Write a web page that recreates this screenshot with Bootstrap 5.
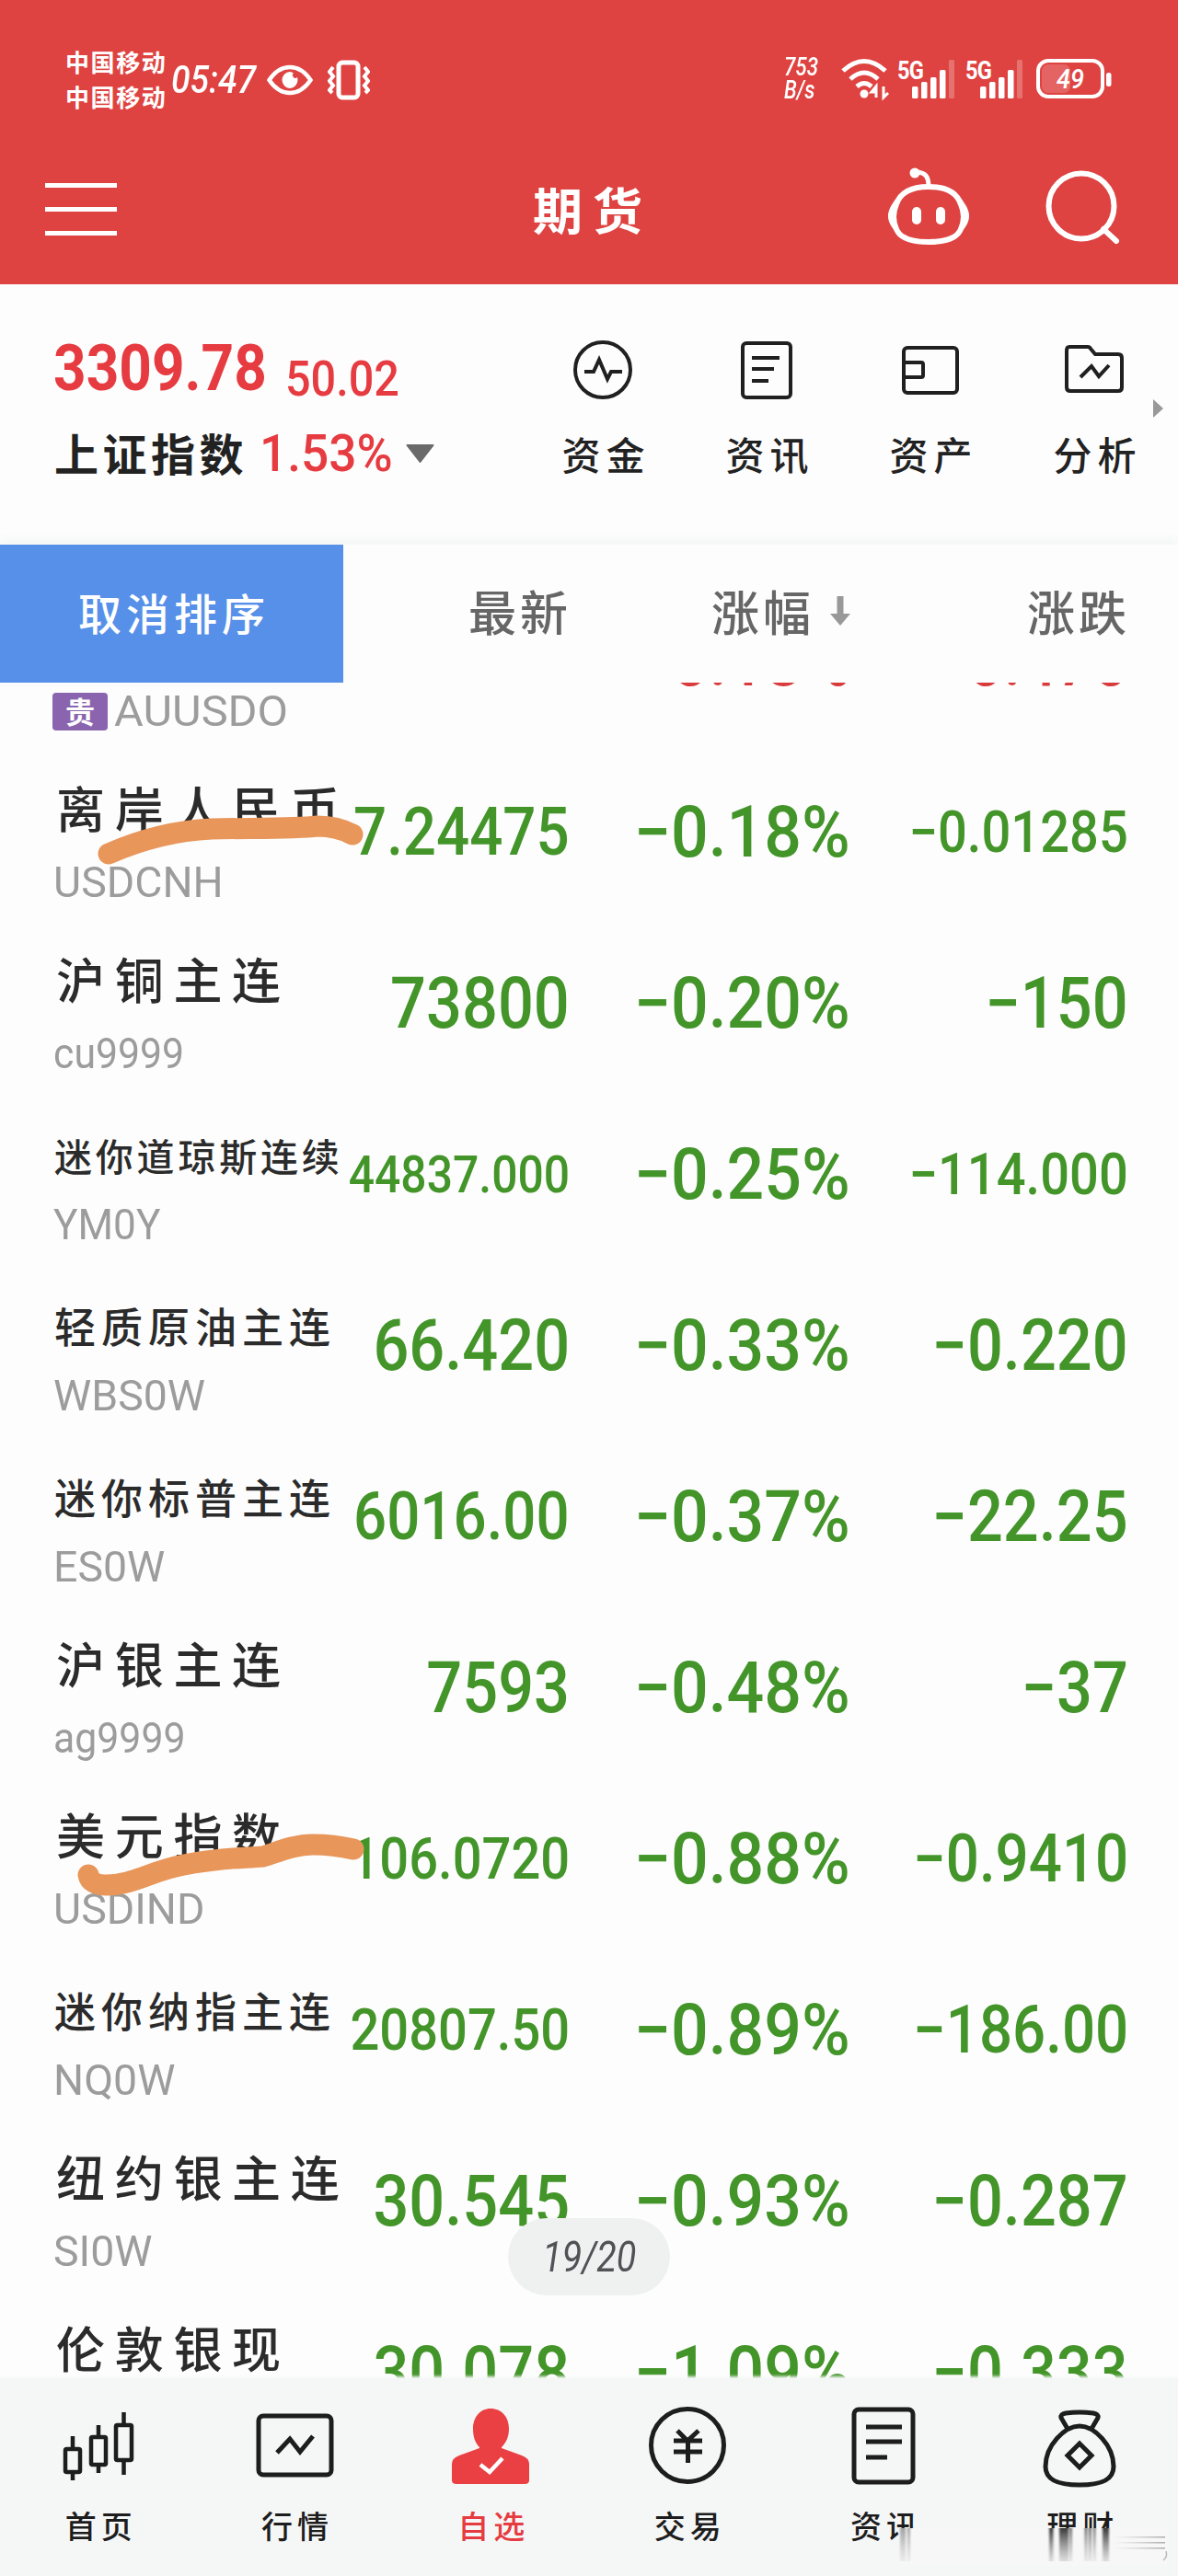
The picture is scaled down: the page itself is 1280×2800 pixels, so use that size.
<!DOCTYPE html>
<html lang="zh-CN">
<head>
<meta charset="utf-8">
<meta name="viewport" content="width=device-width, initial-scale=1">
<title>期货</title>
<link href="https://cdn.jsdelivr.net/npm/bootstrap@5.3.0/dist/css/bootstrap.min.css" rel="stylesheet">
<style>
body{width:1280px;height:2800px;overflow:hidden;background:#fdfdfd;font-family:Roboto,"Noto Sans CJK SC",sans-serif;color:#222;line-height:1}
svg{display:block;flex:none}
.cn{font-family:"Noto Sans CJK SC",sans-serif;white-space:nowrap}
.nw{display:block;white-space:nowrap;flex:none;transform-origin:0 50%}
/* red header */
.topbar{background:#de4341;height:309px}
.statusbar{padding:44px 72px 0 71px;height:130px}
.carrier{width:115px;font-size:26px;letter-spacing:1.6px;line-height:38px;font-weight:700;margin-top:4px}
.clock{width:104px;font-size:43px;line-height:84px;transform:scaleX(.87);font-weight:500;font-style:italic}
.speed{width:62px;font-size:27px;line-height:25px;transform:scaleX(.83);font-weight:500;font-style:italic;margin-top:17px}
.netlabel{font-size:28px;font-weight:700;letter-spacing:-1px}
.titlebar{height:179px;padding:15px 65px 0 49px}
.menu-lines span{display:block;width:78px;height:5px;background:#fff;margin-bottom:21px}
.menu-lines span:last-child{margin-bottom:0}
.title-text{font-size:54px;font-weight:700;letter-spacing:11px;line-height:60px;width:130px;margin-left:452px}
.head-icons{margin-top:-8px}
/* index summary */
.summary{height:283px;padding:56px 0 0 59px}
.up{color:#e63b40}
.idx{width:252px;font-size:71px;font-weight:700;line-height:70px;transform:scaleX(.875);margin-left:-1px}
.diff{font-size:54px;font-weight:500;line-height:54px;margin-top:20px;transform:scaleX(.9)}
.idxname{font-size:48px;letter-spacing:4.5px;font-weight:700;line-height:60px;width:223px;margin-top:-5px}
.pct{width:159px;font-size:56px;font-weight:500;line-height:60px;transform:scaleX(.95)}
.tool{width:178px}
.tool svg{height:70px}
.tool .cn{font-size:42px;letter-spacing:6px;line-height:50px;font-weight:500;margin-top:33px;padding-left:7px}
/* column heads */
.heads{height:150px;box-shadow:0 -8px 8px #f6f8f8}
.btn-sort{width:373px;height:150px;background:#5790e8;color:#fff;font-size:47px;letter-spacing:5px;font-weight:500;border-radius:0;padding:0 0 6px 5px}
.heads .hd{font-size:52px;letter-spacing:4px;font-weight:500;color:#666;line-height:60px;margin-top:-7px;position:relative;left:5px}
.c-price{width:243px}.c-pct{width:304px}.c-chg{width:303px}
.c-name{width:373px;padding:34px 0 0 59px}
/* quote rows */
.quotes{height:1843px}
.quotes .first{margin-top:-117px}
.quote{height:186px}
.num{color:#43952a;font-weight:500;transform:scaleX(.89);transform-origin:100% 50%;font-size:77px;line-height:90px;white-space:nowrap;flex:none;margin:2px -3px 0 0}
.c-pct .num{transform:scaleX(.93);margin-right:-4px}
.num.up{color:#d93a3a}
.s56{font-size:56px}.s63{font-size:63px}.s72{font-size:71.5px}
.nm{font-size:53px;letter-spacing:10.7px;font-weight:500;color:#2b2b2b;line-height:64px;height:64px;padding-left:2px;white-space:nowrap;font-family:"Noto Sans CJK SC",sans-serif}
.nm6{font-size:45px;letter-spacing:6px;padding:6px 0 0 0}
.nm7{font-size:41px;letter-spacing:3.8px;padding:6px 0 0 0}
.code{font-size:46px;color:#9c9c9c;line-height:56px;margin-top:22px;margin-left:-1px;transform-origin:0 50%;white-space:nowrap;transform:scaleX(1.01)}
.code.dig{transform:scaleX(.93)}
.metal{width:60px;height:41px;background:#8a64ae;color:#fff;font-size:32px;font-weight:700;border-radius:4px;margin:22px 8px 0 -2px;line-height:38px}
.marks{left:0;top:0;z-index:2;pointer-events:none}
.pager{left:552px;top:1669px;width:176px;height:84px;background:#eff0f0;border-radius:42px;color:#505356;z-index:3}
.pager span{font-size:46px;transform:scaleX(.86);font-style:italic}
/* tab bar */
.tabs{height:215px;background:#f5f6f6;box-shadow:0 -2px 3px #f8f9f9}
.tab-item{width:213.33px;padding-top:28px}
.tab-item .cn{font-size:34px;letter-spacing:5px;padding-left:6px;line-height:44px;font-weight:500;margin-top:18px;color:#1d1d1d}
.tab-item.on .cn{color:#e63b40}
.smear{left:970px;top:160px;z-index:4}
</style>
<script src="https://cdn.jsdelivr.net/npm/bootstrap@5.3.0/dist/js/bootstrap.bundle.min.js"></script>
</head>
<body>
<header class="topbar text-white">
  <div class="statusbar d-flex align-items-start">
    <div class="cn carrier"><div>中国移动</div><div>中国移动</div></div>
    <span class="nw clock">05:47</span>
    <svg width="50" height="84" viewBox="0 0 50 84" fill="none" stroke="#fff" stroke-width="4.5"><path d="M2.500 43Q12 29 25 29T47.500 43Q38 57 25 57T2.500 43Z"/><path d="M25 34a8.500 9 0 1 0 8.500 9c0-1-.2-2-.5-3a3 3 0 1 1-4-4.500Q27 34 25 34Z" fill="#fff" stroke="none"/></svg>
    <svg class="ms-3" width="46" height="84" viewBox="0 0 46 84" fill="none" stroke="#fff" stroke-width="4"><rect x="12" y="24" width="21" height="38" rx="4" stroke-width="5"/><path d="M6 29l-4 5 4 5-4 5 4 5-4 5 3 3M40 29l4 5-4 5 4 5-4 5 4 5-3 3"/></svg>
    <div class="nw speed ms-auto"><div>753</div><div>B/s</div></div>
    <svg width="54" height="84" viewBox="0 0 54 84" fill="none" stroke="#fff" stroke-width="5"><path d="M2 33Q25 12 48 33M10 42Q25 28 40 42M17 50Q25 43 33 50"/><circle cx="25" cy="58" r="4.500" fill="#fff" stroke="none"/><path d="M38 62V50l-5 6h6M46 50v12l5-5" stroke-width="3"/></svg>
    <svg class="ms-2" width="66" height="84" viewBox="0 0 66 84" fill="#fff"><text class="netlabel" x="-1" y="42" textLength="28" lengthAdjust="spacingAndGlyphs">5G</text><rect x="15" y="50" width="6.500" height="13" rx="1.500"/><rect x="25" y="45" width="6.500" height="18" rx="1.500"/><rect x="35" y="40" width="6.500" height="23" rx="1.500"/><rect x="45" y="32" width="6.500" height="31" rx="1.500"/><rect x="55" y="21" width="6" height="42" rx="1.500" opacity=".25"/></svg>
    <svg class="ms-2" width="66" height="84" viewBox="0 0 66 84" fill="#fff"><text class="netlabel" x="-1" y="42" textLength="28" lengthAdjust="spacingAndGlyphs">5G</text><rect x="15" y="50" width="6.500" height="13" rx="1.500"/><rect x="25" y="45" width="6.500" height="18" rx="1.500"/><rect x="35" y="40" width="6.500" height="23" rx="1.500"/><rect x="45" y="32" width="6.500" height="31" rx="1.500"/><rect x="55" y="21" width="6" height="42" rx="1.500" opacity=".25"/></svg>
    <svg class="ms-2" width="84" height="84" viewBox="0 0 84 84"><rect x="4" y="22" width="70" height="39" rx="11" fill="none" stroke="#fff" stroke-width="4"/><rect x="8" y="26" width="31" height="31" rx="7" fill="#fff" opacity=".18"/><rect x="78" y="35" width="5.500" height="15" rx="2.500" fill="#fff"/><text x="24" y="52" font-size="29" font-weight="500" font-style="italic" fill="#fff" textLength="30" lengthAdjust="spacingAndGlyphs">49</text></svg>
  </div>
  <div class="titlebar d-flex align-items-center">
    <div class="menu-lines"><span></span><span></span><span></span></div>
    <div class="cn title-text">期货</div>
    <div class="head-icons d-flex align-items-center ms-auto">
      <svg width="96" height="92" viewBox="0 0 96 92" fill="none" stroke="#fff" stroke-width="6"><path d="M50 26C30 26 19 33 15 45C11 54 11 63 15 72C19 82 31 86 50 86S81 82 85 72C89 63 89 54 85 45C81 33 70 26 50 26Z"/><path d="M50 26C50 14 46 11 38 10" stroke-width="5"/><circle cx="35" cy="11" r="5.500" fill="#fff" stroke="none"/><path d="M12 46Q4 58 12 69ZM88 46Q96 58 88 69Z" fill="#fff" stroke-width="4"/><path d="M37 53v9M63 53v9" stroke-width="10" stroke-linecap="round"/></svg>
      <svg style="margin-left:79px;margin-right:-3px" width="84" height="92" viewBox="0 0 84 92" fill="none" stroke="#fff" stroke-width="6"><circle cx="41" cy="47" r="35.500"/><path d="M65 72l14 13" stroke-linecap="round"/></svg>
    </div>
  </div>
</header>

<section class="summary d-flex">
  <div style="width:507px">
    <div class="d-flex"><span class="nw idx up">3309.78</span><span class="nw diff up">50.02</span></div>
    <div class="d-flex align-items-center pt-3 mt-2">
      <span class="cn idxname">上证指数</span><span class="nw pct up">1.53%</span>
      <svg width="31" height="20" viewBox="0 0 31 20"><path d="M1.500 1h28L15.500 19Z" fill="#6a6a6a" stroke="#6a6a6a" stroke-width="2" stroke-linejoin="round"/></svg>
    </div>
  </div>
  <div class="tool d-flex flex-column align-items-center">
    <svg width="70" height="70" viewBox="0 0 70 70" fill="none" stroke="#202020" stroke-width="4"><circle cx="35" cy="37" r="30"/><path d="M15 39h10l6-13 9 21 4-8h12"/></svg>
    <span class="cn">资金</span></div>
  <div class="tool d-flex flex-column align-items-center">
    <svg width="70" height="70" viewBox="0 0 70 70" fill="none" stroke="#202020" stroke-width="4"><rect x="9" y="8" width="52" height="59" rx="4"/><path d="M19 24h30M19 36h24M19 49h18"/></svg>
    <span class="cn">资讯</span></div>
  <div class="tool d-flex flex-column align-items-center">
    <svg width="70" height="70" viewBox="0 0 70 70" fill="none" stroke="#202020" stroke-width="4"><rect x="6" y="13" width="58" height="49" rx="4"/><path d="M6 29h19q2 0 2 2v12q0 2-2 2H6"/></svg>
    <span class="cn">资产</span></div>
  <div class="tool d-flex flex-column align-items-center">
    <svg width="70" height="70" viewBox="0 0 70 70" fill="none" stroke="#202020" stroke-width="4"><path d="M8 12h20q2 0 3 2l5 6h25q4 0 4 4v32q0 4-4 4H9q-4 0-4-4V16q0-4 3-4Z"/><path d="M20 45l12-12 8 11 11-12"/></svg>
    <span class="cn">分析</span></div>
  <svg style="margin:68px 0 0 -26px" width="13" height="22" viewBox="0 0 13 22"><path d="M1 1l11 10L1 21Z" fill="#999"/></svg>
</section>

<div class="heads d-flex align-items-center">
  <div class="btn-sort cn d-flex align-items-center justify-content-center">取消排序</div>
  <div class="hd cn c-price text-end">最新</div>
  <div class="hd cn c-pct d-flex align-items-center justify-content-end">涨幅<svg class="ms-3" width="24" height="34" viewBox="0 0 24 34"><path d="M8.500 1h7v19H23L12 33 1 20h7.500Z" fill="#999"/></svg></div>
  <div class="hd cn c-chg text-end">涨跌</div>
</div>

<main class="quotes overflow-hidden position-relative">
  <div class="quote first d-flex align-items-center">
    <div class="c-name align-self-start"><div class="nm">&nbsp;</div><div class="d-flex align-items-center"><span class="metal cn text-center">贵</span><span class="code" style="transform:scaleX(1.06)">AUUSDO</span></div></div>
    <div class="c-price d-flex justify-content-end"><span class="num up s63">2664.20</span></div>
    <div class="c-pct d-flex justify-content-end"><span class="num up">0.18%</span></div>
    <div class="c-chg d-flex justify-content-end"><span class="num up">0.470</span></div>
  </div>
  <div class="quote d-flex align-items-center">
    <div class="c-name align-self-start"><div class="nm">离岸人民币</div><div class="code">USDCNH</div></div>
    <div class="c-price d-flex justify-content-end"><span class="num s72">7.24475</span></div>
    <div class="c-pct d-flex justify-content-end"><span class="num">−0.18%</span></div>
    <div class="c-chg d-flex justify-content-end"><span class="num s63">−0.01285</span></div>
  </div>
  <div class="quote d-flex align-items-center">
    <div class="c-name align-self-start"><div class="nm">沪铜主连</div><div class="code dig">cu9999</div></div>
    <div class="c-price d-flex justify-content-end"><span class="num">73800</span></div>
    <div class="c-pct d-flex justify-content-end"><span class="num">−0.20%</span></div>
    <div class="c-chg d-flex justify-content-end"><span class="num">−150</span></div>
  </div>
  <div class="quote d-flex align-items-center">
    <div class="c-name align-self-start"><div class="nm nm7">迷你道琼斯连续</div><div class="code" style="transform:scaleX(.96)">YM0Y</div></div>
    <div class="c-price d-flex justify-content-end"><span class="num s56">44837.000</span></div>
    <div class="c-pct d-flex justify-content-end"><span class="num">−0.25%</span></div>
    <div class="c-chg d-flex justify-content-end"><span class="num s63">−114.000</span></div>
  </div>
  <div class="quote d-flex align-items-center">
    <div class="c-name align-self-start"><div class="nm nm6">轻质原油主连</div><div class="code">WBS0W</div></div>
    <div class="c-price d-flex justify-content-end"><span class="num">66.420</span></div>
    <div class="c-pct d-flex justify-content-end"><span class="num">−0.33%</span></div>
    <div class="c-chg d-flex justify-content-end"><span class="num">−0.220</span></div>
  </div>
  <div class="quote d-flex align-items-center">
    <div class="c-name align-self-start"><div class="nm nm6">迷你标普主连</div><div class="code">ES0W</div></div>
    <div class="c-price d-flex justify-content-end"><span class="num s72">6016.00</span></div>
    <div class="c-pct d-flex justify-content-end"><span class="num">−0.37%</span></div>
    <div class="c-chg d-flex justify-content-end"><span class="num">−22.25</span></div>
  </div>
  <div class="quote d-flex align-items-center">
    <div class="c-name align-self-start"><div class="nm">沪银主连</div><div class="code dig">ag9999</div></div>
    <div class="c-price d-flex justify-content-end"><span class="num">7593</span></div>
    <div class="c-pct d-flex justify-content-end"><span class="num">−0.48%</span></div>
    <div class="c-chg d-flex justify-content-end"><span class="num">−37</span></div>
  </div>
  <div class="quote d-flex align-items-center">
    <div class="c-name align-self-start"><div class="nm">美元指数</div><div class="code">USDIND</div></div>
    <div class="c-price d-flex justify-content-end"><span class="num s63">106.0720</span></div>
    <div class="c-pct d-flex justify-content-end"><span class="num">−0.88%</span></div>
    <div class="c-chg d-flex justify-content-end"><span class="num s72">−0.9410</span></div>
  </div>
  <div class="quote d-flex align-items-center">
    <div class="c-name align-self-start"><div class="nm nm6">迷你纳指主连</div><div class="code">NQ0W</div></div>
    <div class="c-price d-flex justify-content-end"><span class="num s63">20807.50</span></div>
    <div class="c-pct d-flex justify-content-end"><span class="num">−0.89%</span></div>
    <div class="c-chg d-flex justify-content-end"><span class="num s72">−186.00</span></div>
  </div>
  <div class="quote d-flex align-items-center">
    <div class="c-name align-self-start"><div class="nm">纽约银主连</div><div class="code">SI0W</div></div>
    <div class="c-price d-flex justify-content-end"><span class="num">30.545</span></div>
    <div class="c-pct d-flex justify-content-end"><span class="num">−0.93%</span></div>
    <div class="c-chg d-flex justify-content-end"><span class="num">−0.287</span></div>
  </div>
  <div class="quote d-flex align-items-center">
    <div class="c-name align-self-start"><div class="nm">伦敦银现</div></div>
    <div class="c-price d-flex justify-content-end"><span class="num">30.078</span></div>
    <div class="c-pct d-flex justify-content-end"><span class="num">−1.09%</span></div>
    <div class="c-chg d-flex justify-content-end"><span class="num">−0.333</span></div>
  </div>
  <!-- marker strokes over the two highlighted names -->
  <svg class="marks position-absolute" width="420" height="1500" viewBox="0 742 420 1500" fill="none" stroke="#e8965a" stroke-width="23" stroke-linecap="round" stroke-linejoin="round"><path d="M118 928C150 914 185 903 230 901C275 900 320 901 345 898Q366 898 383 907"/><path d="M96 2038Q98 2049 116 2049C145 2049 165 2033 200 2027C240 2019 262 2020 286 2018C300 2014 318 2005 340 2005Q362 2005 384 2010"/></svg>
  <div class="pager position-absolute d-flex align-items-center justify-content-center"><span>19/20</span></div>
</main>

<nav class="tabs d-flex position-relative">
  <div class="tab-item d-flex flex-column align-items-center">
    <svg width="90" height="92" viewBox="0 0 90 92" fill="none" stroke="#1d1d1d" stroke-width="4.500"><rect x="9" y="49" width="16" height="25" rx="1.500"/><path d="M17 35v14M17 74v9"/><rect x="37" y="36" width="16" height="30" rx="1.500"/><path d="M45 23v13M45 66v9"/><rect x="64" y="23" width="17" height="38" rx="1.500"/><path d="M72.500 9v14M72.500 61v16"/></svg><span class="cn">首页</span></div>
  <div class="tab-item d-flex flex-column align-items-center">
    <svg width="90" height="92" viewBox="0 0 90 92" fill="none" stroke="#1d1d1d" stroke-width="5"><rect x="6" y="13" width="79" height="64" rx="5"/><path d="M26 53l14-15 11 14 14-17"/></svg><span class="cn">行情</span></div>
  <div class="tab-item on d-flex flex-column align-items-center">
    <svg width="90" height="92" viewBox="0 0 90 92" fill="#ea3f43"><path d="M45 5C57 5 65 14 65 27C65 37 61 43 57 47V48L79 56Q87 59 87 65V83Q87 87 82 87H8Q3 87 3 83V65Q3 59 11 56L33 48V47C29 43 26 37 26 27C26 14 34 5 45 5Z"/><path d="M34 66l10 8 14-15" fill="none" stroke="#fff" stroke-width="4.500"/></svg><span class="cn">自选</span></div>
  <div class="tab-item d-flex flex-column align-items-center">
    <svg width="90" height="92" viewBox="0 0 90 92" fill="none" stroke="#1d1d1d" stroke-width="5"><circle cx="45" cy="45" r="39.500"/><path d="M34 29l11 11 12-11M30 40h31M30 52h31M45.500 40v24"/></svg><span class="cn">交易</span></div>
  <div class="tab-item d-flex flex-column align-items-center">
    <svg width="90" height="92" viewBox="0 0 90 92" fill="none" stroke="#1d1d1d" stroke-width="5"><rect x="13" y="6" width="64" height="79" rx="5"/><path d="M26 25h39M26 41h39M26 58h23"/></svg><span class="cn">资讯</span></div>
  <div class="tab-item d-flex flex-column align-items-center">
    <svg width="90" height="92" viewBox="0 0 90 92" fill="none" stroke="#1d1d1d" stroke-width="5" stroke-linejoin="round"><path d="M32 27L25 15Q24 11 30 10Q45 8 60 10Q66 11 65 15L58 27"/><path d="M45 24C29 24 8 45 8 68C8 83 22 88 45 88S82 83 82 68C82 45 61 24 45 24Z"/><path d="M45 43L58 56 45 69 32 56Z" stroke-linejoin="miter"/></svg><span class="cn">理财</span></div>
  <!-- smudged strip over the corner -->
  <svg class="smear position-absolute" width="300" height="46" viewBox="0 0 300 46">
    <defs>
      <linearGradient id="fadeDown" x1="0" y1="0" x2="0" y2="1"><stop offset="0" stop-color="#222" stop-opacity=".9"/><stop offset="1" stop-color="#777" stop-opacity=".2"/></linearGradient>
      <linearGradient id="fadeRight"><stop offset="0" stop-color="#bbb" stop-opacity="0"/><stop offset="1" stop-color="#aaa"/></linearGradient>
      <filter id="soft" x="-10%" y="0" width="120%" height="100%"><feGaussianBlur stdDeviation=".9 0"/></filter>
    </defs>
    <rect x="8" y="3" width="290" height="40" fill="#f7f7f7"/>
    <g fill="url(#fadeDown)" filter="url(#soft)"><rect x="170" y="3" width="4.500" height="36"/><rect x="181" y="3" width="10" height="36"/><rect x="192" y="3" width="3" height="36" opacity=".7"/><rect x="208.500" y="3" width="3" height="36" opacity=".7"/><rect x="213" y="3" width="3" height="36" opacity=".7"/><rect x="218" y="3" width="2.500" height="36" opacity=".7"/><rect x="228" y="3" width="7" height="36"/></g>
    <g fill="url(#fadeDown)" opacity=".45" filter="url(#soft)"><rect x="8" y="3" width="6" height="36"/><rect x="16" y="3" width="3" height="36"/></g>
    <g fill="url(#fadeRight)"><rect x="240" y="12" width="56" height="1.500"/><rect x="240" y="18" width="56" height="1.500"/><rect x="240" y="24" width="56" height="1.500"/></g><path d="M297 28q2 6-3 10" fill="none" stroke="#bbb" stroke-width="1.500"/>
  </svg>
</nav>
</body>
</html>
